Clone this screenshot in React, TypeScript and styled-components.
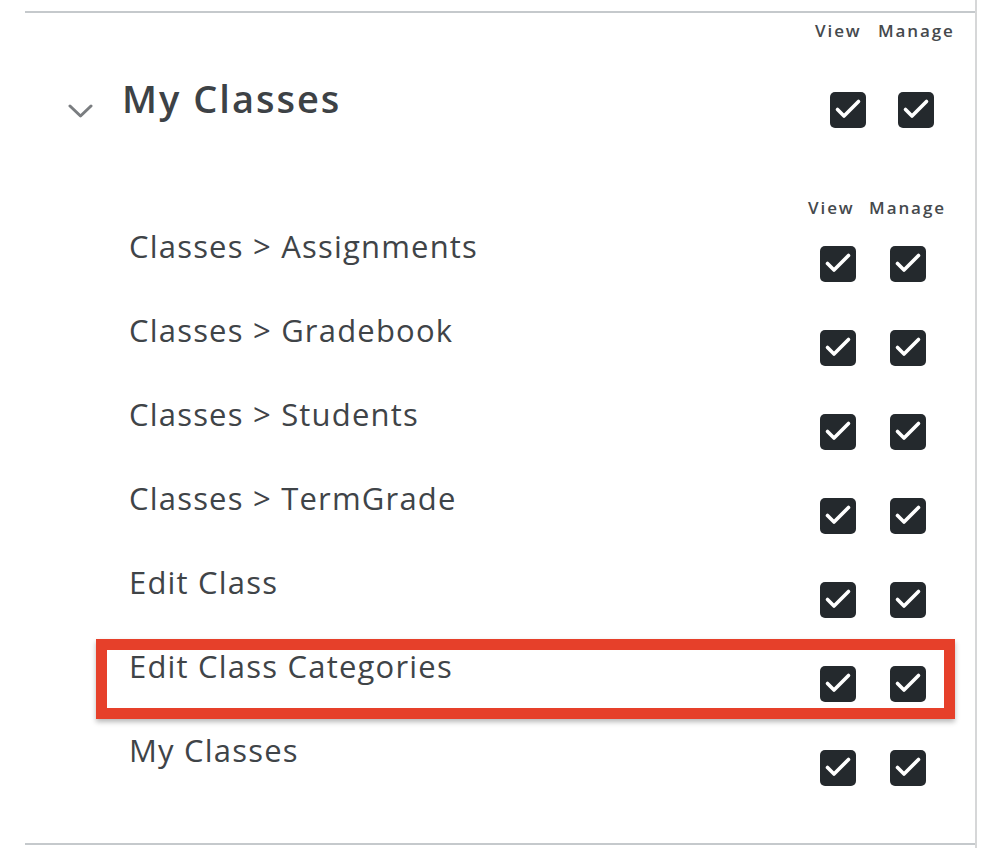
import React from "react";
import styled, { createGlobalStyle } from "styled-components";

const GlobalStyle = createGlobalStyle`
  html, body {
    margin: 0;
    padding: 0;
    background: #fff;
  }
  body {
    font-family: "Open Sans", "Liberation Sans", sans-serif;
    color: #3f4448;
  }
`;

const permissions = [
  { name: "Classes > Assignments" },
  { name: "Classes > Gradebook" },
  { name: "Classes > Students" },
  { name: "Classes > TermGrade" },
  { name: "Edit Class" },
  { name: "Edit Class Categories", marked: true },
  { name: "My Classes" },
];

const Check = () => (
  <Box>
    <svg width="36" height="36" viewBox="0 0 36 36">
      <path
        d="M7.5 17.5 L14 24 L28.5 9.5"
        fill="none"
        stroke="#fff"
        strokeWidth="3.6"
        strokeLinecap="round"
        strokeLinejoin="round"
      />
    </svg>
  </Box>
);

const Chevron = () => (
  <ChevronIcon width="25" height="15" viewBox="0 0 25 15">
    <path
      d="M2 2 L12.5 12 L23 2"
      fill="none"
      stroke="#7a7d80"
      strokeWidth="3"
      strokeLinecap="round"
      strokeLinejoin="round"
    />
  </ChevronIcon>
);

const App = () => {
  return (
    <>
      <GlobalStyle />
      <Page>
        <Section>
          <HeadGrid>
            <ColLabel>View</ColLabel>
            <ColLabel center>Manage</ColLabel>
          </HeadGrid>
          <HeadingRow>
            <TitleGroup>
              <Chevron />
              <Title>My Classes</Title>
            </TitleGroup>
            <CheckCell end>
              <Check />
            </CheckCell>
            <CheckCell>
              <Check />
            </CheckCell>
          </HeadingRow>

          <SubHead>
            <ColLabel>View</ColLabel>
            <ColLabel center>Manage</ColLabel>
          </SubHead>
          <Rows>
            {permissions.map((p) => (
              <Row key={p.name} marked={p.marked}>
                <RowLabel>{p.name}</RowLabel>
                <RowCheck end>
                  <Check />
                </RowCheck>
                <RowCheck>
                  <Check />
                </RowCheck>
              </Row>
            ))}
          </Rows>
        </Section>
      </Page>
    </>
  );
};

const Page = styled.div`
  margin-left: 25px;
  width: 950px;
  min-height: 100vh;
  border-right: 2px solid #d6d7d8;
  padding-top: 11px;
  box-sizing: content-box;
`;

const Section = styled.section`
  border-top: 2px solid #c5c9cc;
  border-bottom: 2px solid #c5c9cc;
  padding: 8px 0 29px;
`;

const HeadGrid = styled.div`
  display: grid;
  grid-template-columns: 1fr 51px 76px;
  column-gap: 12px;
  padding-right: 21px;
`;

const SubHead = styled.div`
  display: grid;
  grid-template-columns: 1fr 48px 77px;
  column-gap: 13px;
  padding-right: 29px;
  margin-top: 38px;
`;

const ColLabel = styled.div<{ center?: boolean }>`
  grid-column: ${(p) => (p.center ? 3 : 2)};
  font-size: 17px;
  line-height: 20px;
  font-weight: 600;
  letter-spacing: 1.9px;
  color: #45494d;
  white-space: nowrap;
  text-align: ${(p) => (p.center ? "center" : "left")};
`;

const HeadingRow = styled.div`
  display: grid;
  grid-template-columns: 1fr 51px 76px;
  column-gap: 12px;
  align-items: start;
  margin-top: 35px;
  padding-right: 21px;
  height: 84px;
`;

const TitleGroup = styled.div`
  display: flex;
  align-items: flex-start;
  padding-left: 43px;
`;

const ChevronIcon = styled.svg`
  flex: none;
  margin-top: 28px;
  margin-right: 29px;
`;

const Title = styled.h2`
  margin: 0;
  font-size: 38px;
  line-height: 44px;
  font-weight: 600;
  letter-spacing: 2px;
  color: #3d4246;
  white-space: nowrap;
`;

const CheckCell = styled.div<{ end?: boolean }>`
  display: flex;
  justify-content: ${(p) => (p.end ? "flex-end" : "center")};
  margin-top: 16px;
`;

const Rows = styled.div`
  margin-top: 8px;
`;

const Row = styled.div<{ marked?: boolean }>`
  position: relative;
  display: grid;
  grid-template-columns: 1fr 48px 77px;
  column-gap: 13px;
  align-items: start;
  height: 84px;
  padding-left: 104px;
  padding-right: 29px;

  &::after {
    content: "";
    display: ${(p) => (p.marked ? "block" : "none")};
    position: absolute;
    left: 71px;
    right: 20px;
    top: -7px;
    height: 80px;
    box-sizing: border-box;
    border: 11px solid #e6402a;
    box-shadow: 0 3px 5px rgba(0, 0, 0, 0.28);
    pointer-events: none;
  }
`;

const RowLabel = styled.div`
  margin-top: 2px;
  font-size: 31px;
  line-height: 36px;
  font-weight: 400;
  color: #3f4448;
  letter-spacing: 1.2px;
  white-space: nowrap;
`;

const RowCheck = styled.div<{ end?: boolean }>`
  display: flex;
  justify-content: ${(p) => (p.end ? "flex-end" : "center")};
  margin-top: 20px;
`;

const Box = styled.div`
  width: 36px;
  height: 36px;
  border-radius: 5px;
  background: #24292d;
  display: flex;
  align-items: center;
  justify-content: center;
`;

export default App;
